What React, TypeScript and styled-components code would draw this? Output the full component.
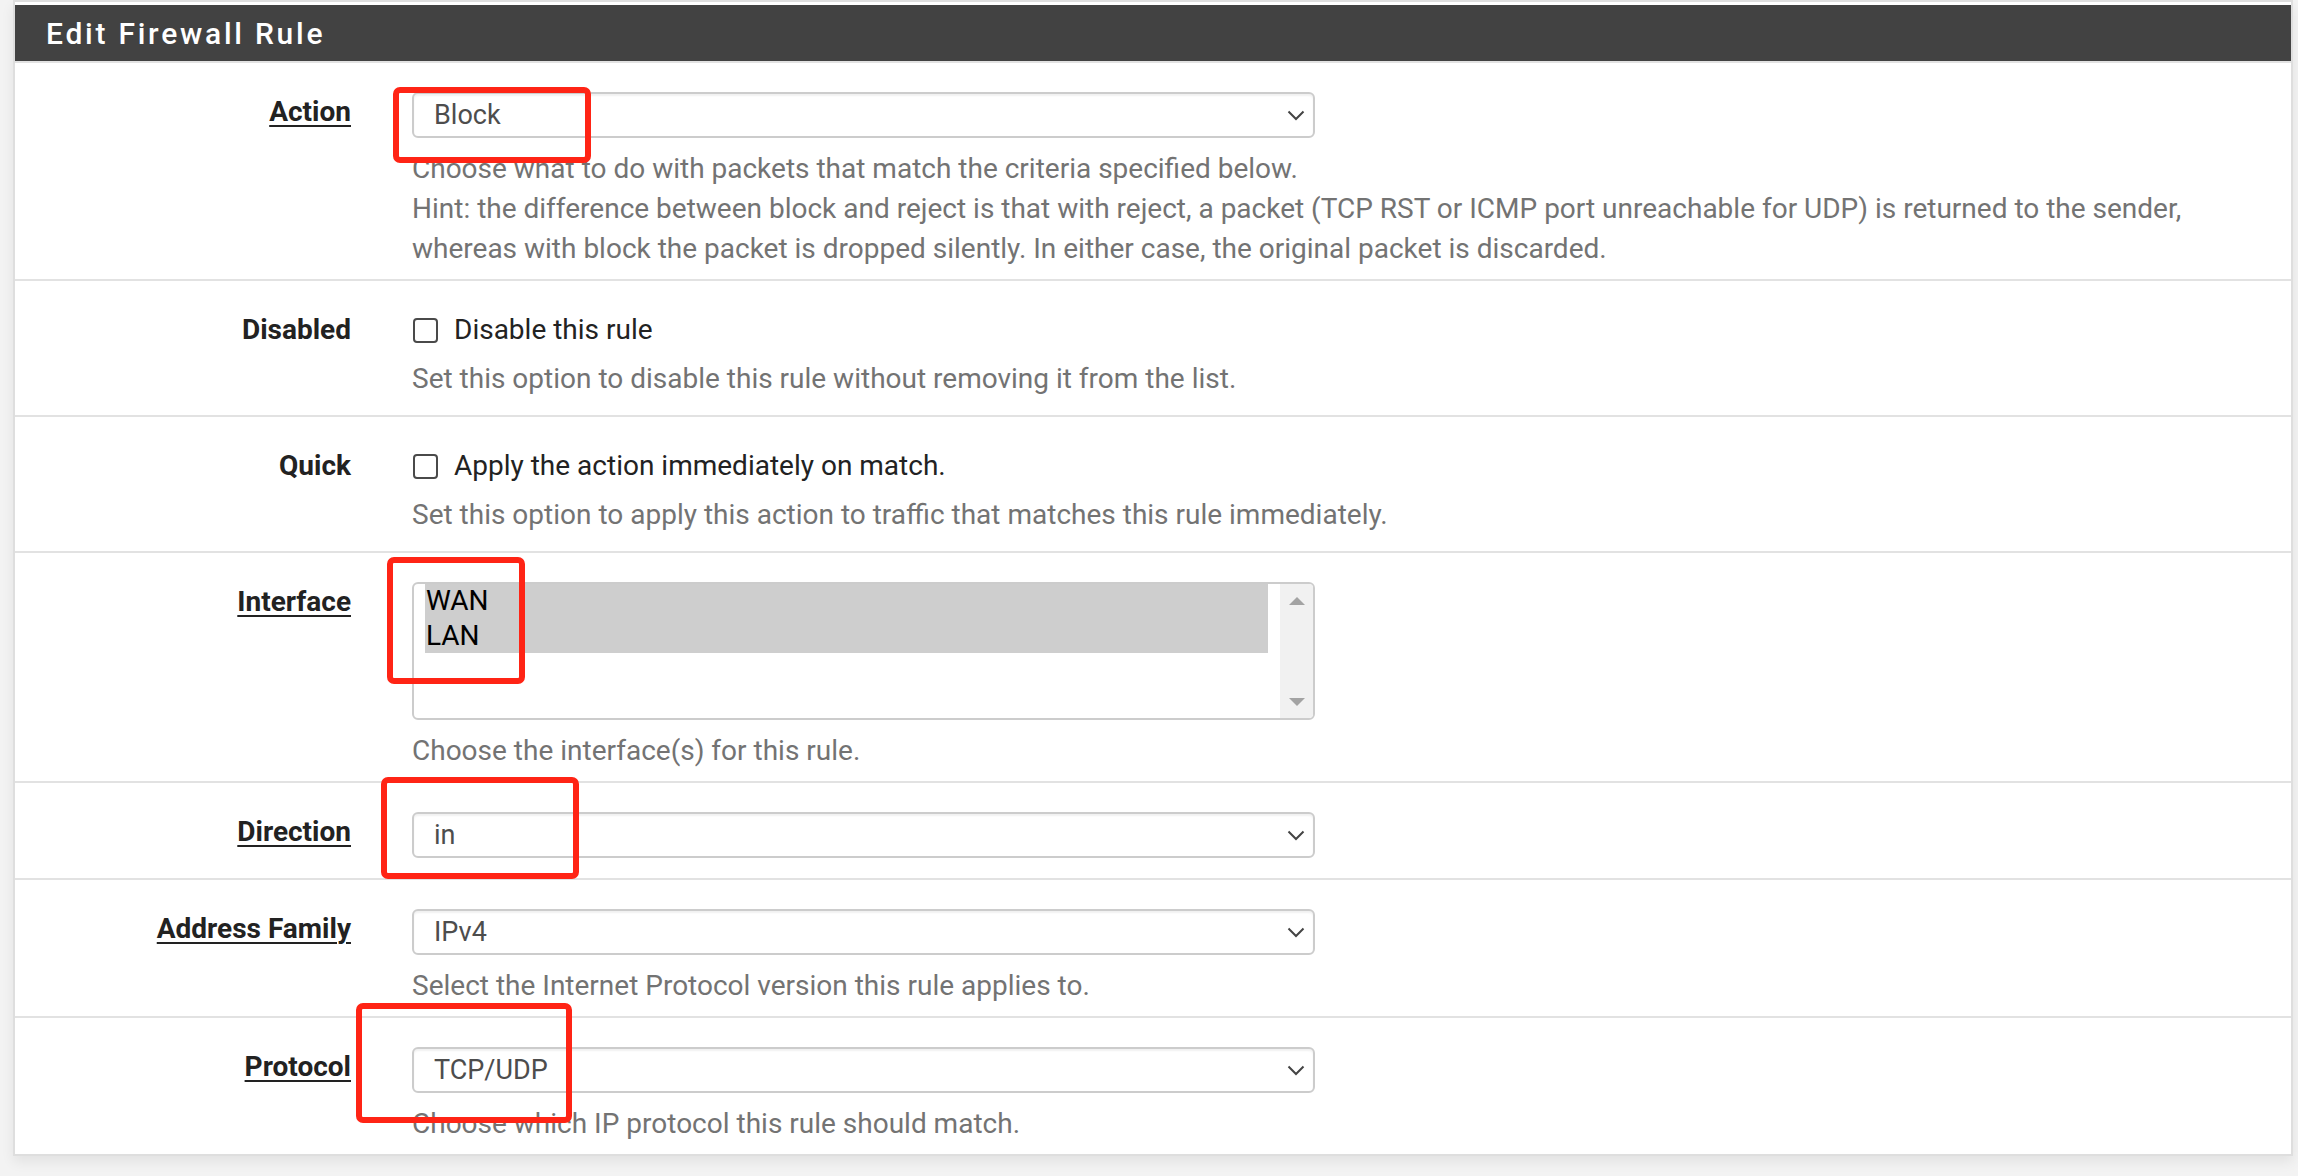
import React from "react";
import styled, { createGlobalStyle } from "styled-components";

const GlobalStyle = createGlobalStyle`
  html, body {
    margin: 0;
    padding: 0;
    background: #f3f3f3;
    font-family: Roboto, "Noto Sans", "Liberation Sans", sans-serif;
  }
  * { box-sizing: border-box; }
`;

const Page = styled.div`
  position: relative;
  width: 2298px;
  height: 1176px;
  padding: 0 5px 0 13px;
  overflow: hidden;
`;

const Panel = styled.section`
  background: #fff;
  border: 2px solid #dedede;
  padding-top: 3px;
  box-shadow: 0 6px 12px rgba(0, 0, 0, 0.07);
`;

const Heading = styled.h2`
  margin: 0;
  height: 56px;
  display: flex;
  align-items: center;
  padding-left: 31px;
  background: #424242;
  color: #fff;
  font-size: 30px;
  font-weight: 500;
  letter-spacing: 2.75px;
`;

const Row = styled.div<{ $padBottom?: number }>`
  display: grid;
  grid-template-columns: 336px 1fr;
  column-gap: 61px;
  border-top: 2px solid #e2e2e2;
  padding: 29px 0 ${(p) => p.$padBottom ?? 11}px;
`;

const Label = styled.div<{ $link?: boolean }>`
  text-align: right;
  font-size: 28px;
  font-weight: 700;
  line-height: 40px;
  color: #222;
  text-decoration: ${(p) => (p.$link ? "underline" : "none")};
  text-decoration-thickness: 2px;
  text-underline-offset: 4px;
`;

const Control = styled.div`
  display: flex;
  flex-direction: column;
  min-width: 0;
`;

const SelectBox = styled.div`
  width: 903px;
  height: 46px;
  border: 2px solid #cccccc;
  border-radius: 6px;
  box-shadow: inset 0 2px 2px rgba(0, 0, 0, 0.06);
  display: flex;
  align-items: center;
  justify-content: space-between;
  padding: 0 8px 0 20px;
  font-size: 27px;
  color: #4d4d4d;
  background: #fff;
`;

const Chevron = () => (
  <svg width="18" height="11" viewBox="0 0 18 11" aria-hidden="true">
    <polyline points="1.5,1.5 9,9 16.5,1.5" fill="none" stroke="#444" strokeWidth="2" />
  </svg>
);

const ListBox = styled.div`
  width: 903px;
  height: 138px;
  border: 2px solid #cccccc;
  border-radius: 6px;
  display: flex;
  background: #fff;
  overflow: hidden;
`;

const Options = styled.div`
  flex: 1;
  padding: 0 12px 0 11px;
`;

const Option = styled.div<{ $selected?: boolean }>`
  height: 34.5px;
  line-height: 34.5px;
  font-size: 28px;
  color: #000;
  padding-left: 1px;
  background: ${(p) => (p.$selected ? "#cecece" : "transparent")};
`;

const ScrollTrack = styled.div`
  width: 33px;
  background: #f1f1f1;
  display: flex;
  flex-direction: column;
  justify-content: space-between;
  align-items: center;
  padding: 13px 0 12px;
`;

const Arrow = ({ up }: { up?: boolean }) => (
  <svg width="16" height="8" viewBox="0 0 16 8" aria-hidden="true">
    <polygon points={up ? "0,8 16,8 8,0" : "0,0 16,0 8,8"} fill="#a3a3a3" />
  </svg>
);

const Help = styled.p`
  margin: 11px 0 -1px;
  font-size: 28px;
  line-height: 40px;
  color: #737373;
`;

const CheckLine = styled.label`
  display: flex;
  align-items: center;
  gap: 16px;
  height: 40px;
  margin: -1px 0 -1px;
  font-size: 28px;
  color: #222;
`;

const CheckBox = styled.span`
  width: 25px;
  height: 25px;
  margin-top: 3px;
  margin-left: 1px;
  border: 2px solid #4a4a4a;
  border-radius: 4px;
  background: #fff;
  flex: none;
`;

const Mark = styled.div`
  position: absolute;
  border: 6px solid #ff2415;
  border-radius: 7px;
  pointer-events: none;
`;

type Box = { x: number; y: number; w: number; h: number };
const marks: Box[] = [
  { x: 393, y: 87, w: 198, h: 76 },
  { x: 387, y: 557, w: 138, h: 127 },
  { x: 381, y: 777, w: 198, h: 102 },
  { x: 356, y: 1003, w: 216, h: 120 },
];

export default function App() {
  return (
    <>
      <GlobalStyle />
      <Page>
        <Panel>
          <Heading>Edit Firewall Rule</Heading>

          <Row>
            <Label $link>Action</Label>
            <Control>
              <SelectBox>
                <span>Block</span>
                <Chevron />
              </SelectBox>
              <Help>
                Choose what to do with packets that match the criteria specified below.
                <br />
                Hint: the difference between block and reject is that with reject, a packet (TCP RST or ICMP port unreachable for UDP) is returned to the sender,
                <br />
                whereas with block the packet is dropped silently. In either case, the original packet is discarded.
              </Help>
            </Control>
          </Row>

          <Row $padBottom={17}>
            <Label>Disabled</Label>
            <Control>
              <CheckLine>
                <CheckBox />
                Disable this rule
              </CheckLine>
              <Help>Set this option to disable this rule without removing it from the list.</Help>
            </Control>
          </Row>

          <Row $padBottom={17}>
            <Label>Quick</Label>
            <Control>
              <CheckLine>
                <CheckBox />
                Apply the action immediately on match.
              </CheckLine>
              <Help>Set this option to apply this action to traffic that matches this rule immediately.</Help>
            </Control>
          </Row>

          <Row>
            <Label $link>Interface</Label>
            <Control>
              <ListBox>
                <Options>
                  <Option $selected>WAN</Option>
                  <Option $selected>LAN</Option>
                </Options>
                <ScrollTrack>
                  <Arrow up />
                  <Arrow />
                </ScrollTrack>
              </ListBox>
              <Help>Choose the interface(s) for this rule.</Help>
            </Control>
          </Row>

          <Row $padBottom={20}>
            <Label $link>Direction</Label>
            <Control>
              <SelectBox>
                <span>in</span>
                <Chevron />
              </SelectBox>
            </Control>
          </Row>

          <Row>
            <Label $link>Address Family</Label>
            <Control>
              <SelectBox>
                <span>IPv4</span>
                <Chevron />
              </SelectBox>
              <Help>Select the Internet Protocol version this rule applies to.</Help>
            </Control>
          </Row>

          <Row>
            <Label $link>Protocol</Label>
            <Control>
              <SelectBox>
                <span>TCP/UDP</span>
                <Chevron />
              </SelectBox>
              <Help>Choose which IP protocol this rule should match.</Help>
            </Control>
          </Row>
        </Panel>

        {marks.map((m, i) => (
          <Mark key={i} style={{ left: m.x, top: m.y, width: m.w, height: m.h }} />
        ))}
      </Page>
    </>
  );
}
